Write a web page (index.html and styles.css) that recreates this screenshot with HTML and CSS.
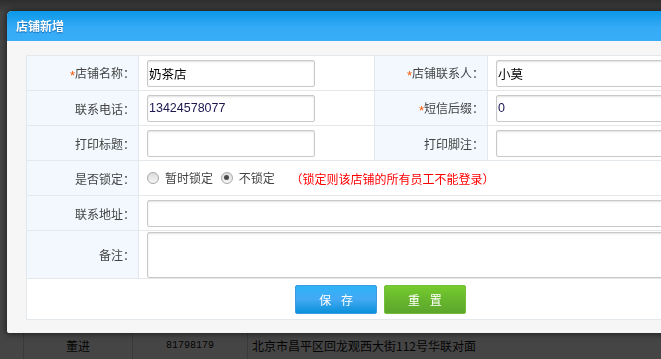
FILE: index.html
```html
<!DOCTYPE html>
<html lang="zh-CN">
<head>
    <meta charset="UTF-8" />
    <meta name="viewport" content="width=device-width, initial-scale=1">
    <link rel="stylesheet" href="styles.css">
</head>
<body>

    <div class="page">
        <div class="topbar"></div>
        <table class="list">
            <colgroup><col class="l1"><col class="l2"><col class="l3"></colgroup>
            <tr><td></td><td></td><td></td></tr>
            <tr><td></td><td></td><td></td></tr>
            <tr><td></td><td></td><td></td></tr>
            <tr><td></td><td></td><td></td></tr>
            <tr><td></td><td></td><td></td></tr>
            <tr><td></td><td></td><td></td></tr>
            <tr><td></td><td></td><td></td></tr>
            <tr><td></td><td></td><td></td></tr>
            <tr><td>董进</td><td class="num">81798179</td><td class="addr">北京市昌平区回龙观西大街112号华联对面</td></tr>
        </table>
    </div>

    <div class="mask"></div>

    <div class="dialog">
        <div class="dialog-hd">店铺新增</div>
        <div class="dialog-bd">
            <table class="form">
                <colgroup><col class="c1"><col class="c2"><col class="c3"><col class="c4"></colgroup>
                <tr>
                    <th><i>*</i>店铺名称：</th>
                    <td><input class="txt" type="text" value="奶茶店" /></td>
                    <th><i>*</i>店铺联系人：</th>
                    <td><input class="txt" type="text" value="小莫" /></td>
                </tr>
                <tr>
                    <th>联系电话：</th>
                    <td><input class="txt tel" type="text" value="13424578077" /></td>
                    <th><i>*</i>短信后缀：</th>
                    <td><input class="txt tel" type="text" value="0" /></td>
                </tr>
                <tr>
                    <th>打印标题：</th>
                    <td><input class="txt" type="text" value="" /></td>
                    <th>打印脚注：</th>
                    <td><input class="txt" type="text" value="" /></td>
                </tr>
                <tr>
                    <th>是否锁定：</th>
                    <td colspan="3">
                        <label class="opt"><span class="radio"></span>暂时锁定</label>
                        <label class="opt"><span class="radio on"></span>不锁定</label>
                        <span class="tip">（锁定则该店铺的所有员工不能登录）</span>
                    </td>
                </tr>
                <tr>
                    <th>联系地址：</th>
                    <td colspan="3"><input class="txt long" type="text" value="" /></td>
                </tr>
                <tr class="memo">
                    <th>备注：</th>
                    <td colspan="3"><textarea></textarea></td>
                </tr>
                <tr class="btns">
                    <td colspan="4">
                        <button class="btn blue">保 存</button>
                        <button class="btn green">重 置</button>
                    </td>
                </tr>
            </table>
        </div>
    </div>

</body>
</html>
```

FILE: styles.css
```css
html,
body {
    padding: 0;
    margin: 0;
    height: 100%;
    overflow: hidden;
}
body {
    font: 12px "Noto Sans CJK SC", sans-serif;
    background: #fff;
}
.topbar {
    height: 12px;
    background: linear-gradient(#a6a6a6, #f6f6f6);
}
.list {
    border-collapse: collapse;
    table-layout: fixed;
    margin-left: 23px;
    width: 640px;
    color: #111;
}
.list .l1 { width: 109px; }
.list .l2 { width: 115px; }
.list td {
    height: 39px;
    padding: 0;
    border: 1px solid #d6d6d6;
    vertical-align: top;
    line-height: 26px;
    text-align: center;
    white-space: nowrap;
}
.list .num {
    font-family: "Liberation Mono", monospace;
    font-size: 10px;
}
.list .addr {
    text-align: left;
    padding-left: 4px;
}
.mask {
    position: fixed;
    top: 0;
    left: 0;
    right: 0;
    bottom: 0;
    background: rgba(0, 0, 0, .73);
}
.dialog {
    position: absolute;
    left: 7px;
    top: 11px;
    width: 746px;
    background: #f6f6f6;
    border-radius: 5px 5px 2px 2px;
    box-shadow: 0 0 6px 1px rgba(0, 0, 0, .55);
    overflow: hidden;
}
.dialog-hd {
    height: 30px;
    line-height: 30px;
    padding-left: 9px;
    color: #fff;
    font-weight: bold;
    background: linear-gradient(#0a97e8, #35abf6 55%, #38aef8);
    text-shadow: 0 1px 1px rgba(0, 70, 140, .7);
}
.dialog-bd {
    padding: 14px 19px 13px;
}
.form {
    width: 708px;
    border-collapse: collapse;
    table-layout: fixed;
    background: #fff;
}
.form .c1 { width: 112px; }
.form .c2 { width: 236px; }
.form .c3 { width: 113px; }
.form .c4 { width: 247px; }
.form th,
.form td {
    border: 1px solid #e3e8ed;
    height: 34px;
    padding: 0;
    vertical-align: middle;
    white-space: nowrap;
}
.form th {
    background: #f2f8fd;
    text-align: right;
    padding-right: 3px;
    font-weight: normal;
    color: #444;
}
.form th i {
    font-style: normal;
    color: #f50;
    font-family: "Liberation Sans", sans-serif;
    font-size: 13px;
    vertical-align: -2px;
    line-height: 1;
}
.form td {
    padding-left: 8px;
}
.txt {
    box-sizing: border-box;
    width: 168px;
    height: 27px;
    margin: 0;
    padding: 0 1px;
    border: 1px solid #c9c9c9;
    border-radius: 2px;
    box-shadow: inset 0 1px 2px rgba(0, 0, 0, .12);
    font: 12.5px "Liberation Sans", "Noto Sans CJK SC", sans-serif;
    color: #000;
    vertical-align: middle;
    outline: none;
}
.txt.tel {
    color: #1c1650;
}
.txt.long {
    width: 560px;
}
.memo td,
.memo th {
    height: 47px;
}
textarea {
    display: block;
    box-sizing: border-box;
    width: 560px;
    height: 46px;
    margin: 0;
    border: 1px solid #c9c9c9;
    border-radius: 2px;
    box-shadow: inset 0 1px 2px rgba(0, 0, 0, .12);
    resize: none;
    outline: none;
}
.opt {
    display: inline-flex;
    align-items: center;
    color: #444;
    margin-right: 5px;
}
.radio {
    box-sizing: border-box;
    width: 12px;
    height: 12px;
    margin-right: 6px;
    border: 1px solid #a9a9a9;
    border-radius: 50%;
    background: linear-gradient(#dcdcdc, #f6f6f6);
    position: relative;
}
.radio.on::after {
    content: "";
    position: absolute;
    left: 2.5px;
    top: 2.5px;
    width: 5px;
    height: 5px;
    border-radius: 50%;
    background: #4a4a4a;
}
.tip {
    color: #f00;
    margin-left: 14px;
    font-feature-settings: "halt";
}
.btns td {
    height: 40px;
    padding: 0;
    text-align: center;
}
.btn {
    box-sizing: border-box;
    width: 82px;
    height: 29px;
    margin: 0 2px;
    padding: 0;
    border: 1px solid;
    border-radius: 2px;
    color: #fff;
    font: 12px "Noto Sans CJK SC", sans-serif;
    word-spacing: 7px;
    vertical-align: middle;
    cursor: pointer;
}
.blue {
    border-color: #3a9ade;
    background: linear-gradient(#2db3f7, #43a9f4 50%, #0a90da);
}
.green {
    border-color: #74bf3a;
    background: linear-gradient(#76cc2f, #67b62d 50%, #5ca62c);
}
```
